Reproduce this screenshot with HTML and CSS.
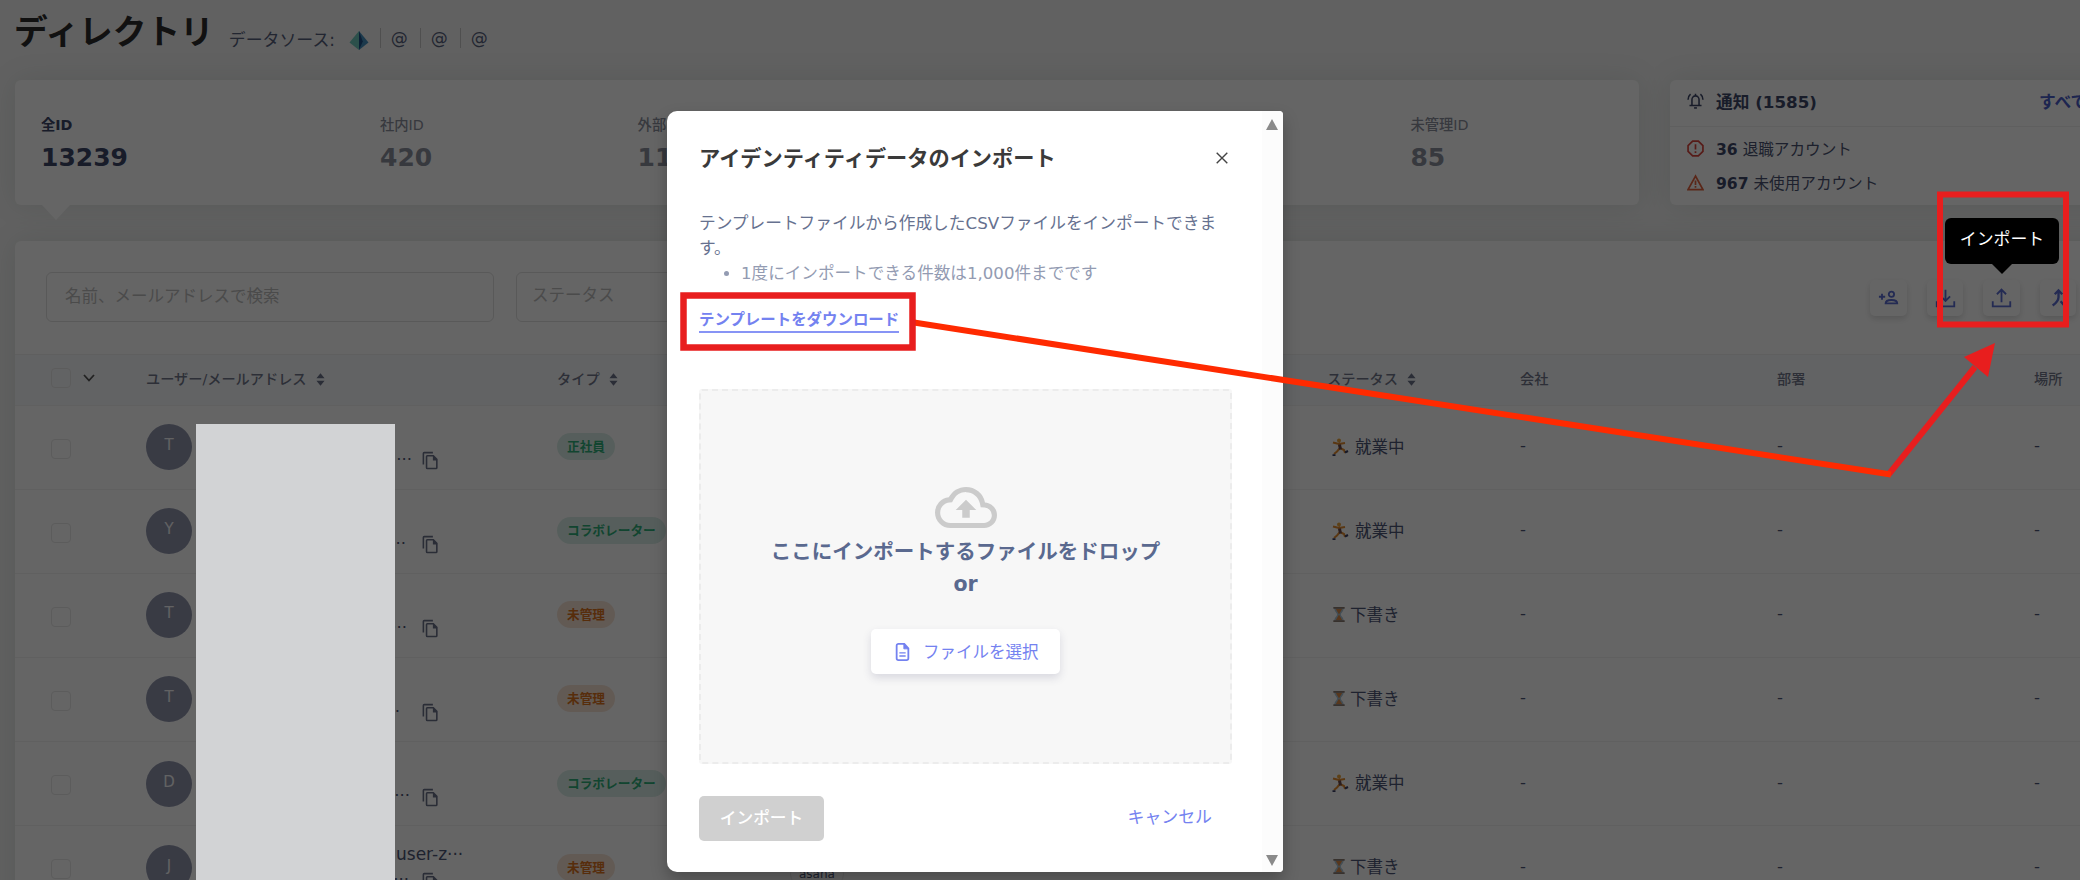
FILE: index.html
```html
<!DOCTYPE html>
<html lang="ja">
<head>
    <meta charset="UTF-8">
    <meta name="viewport" content="width=device-width, initial-scale=1.0">
    <title>ディレクトリ</title>
    <link rel="stylesheet" href="styles.css">
</head>
<body>
    <!-- shared icons -->
    <svg class="sprite">
        <symbol id="copy" viewBox="0 0 24 24"><path d="M15 1H4a2 2 0 0 0-2 2v14h2V3h11zm1 4H8a2 2 0 0 0-2 2v14a2 2 0 0 0 2 2h11a2 2 0 0 0 2-2V10zM8 21V7h7v5h4v9z"/></symbol>
        <symbol id="sort" viewBox="0 0 10 14"><path d="M5 0l4.500 5.500h-9zM5 14L.5 8.500h9z"/></symbol>
        <symbol id="run" viewBox="0 0 18 18">
            <circle cx="8" cy="2.400" r="2" fill="#e9a23b"/>
            <path d="M8 4.500L9 10L6 13.500L3 16M9 10L13 12L14 15M2 4.500L8 6L14 5" fill="none" stroke="#e08a2e" stroke-width="2"/>
            <path d="M8.500 6.500l1 5" stroke="#6b4a4a" stroke-width="3"/>
            <path d="M1.500 17.200h3M14 14.500l3-1.500" stroke="#3a3f66" stroke-width="2"/>
        </symbol>
        <symbol id="glass" viewBox="0 0 14 18">
            <path d="M2 2h10c0 4-3 5-3 7s3 3 3 7H2c0-4 3-5 3-7S2 6 2 2z" fill="#a9c4d6"/>
            <path d="M3.500 3h7L7 9l3.500 6h-7L7 9z" fill="#d98b4a"/>
            <path d="M1 1h12v1.800H1zM1 15.200h12V17H1z" fill="#8a7a70"/>
        </symbol>
    </svg>

    <div class="page">
        <header class="page-header">
            <h1>ディレクトリ</h1>
            <div class="sources">
                <span>データソース:</span>
                <svg class="gem" viewBox="0 0 20 20"><path d="M10 0L0 12l10 8z" fill="#6fc7bb"/><path d="M10 0l10 12-10 8z" fill="#4590bd"/><path d="M10 0l4 11-4 9z" fill="#1f4f86"/></svg>
                <span class="source">@</span>
                <span class="source">@</span>
                <span class="source">@</span>
            </div>
        </header>

        <section class="summary">
            <div class="card stats">
                <div class="stat active"><span>全ID</span><strong>13239</strong></div>
                <div class="stat"><span>社内ID</span><strong>420</strong></div>
                <div class="stat"><span>外部ID</span><strong>1134</strong></div>
                <div class="stat"></div>
                <div class="stat"></div>
                <div class="stat"><span>未管理ID</span><strong>85</strong></div>
            </div>
            <div class="card notices">
                <div class="notice-head">
                    <svg viewBox="0 0 24 24" fill="none" stroke="#3d4668" stroke-width="2.200"><path d="M7 18.500v-8a5 5 0 0 1 10 0v8M3.500 19h17M12 2.500v3M1.500 11c0-3 1-6 3.500-8M22.500 11c0-3-1-6-3.500-8"/><path d="M10 22.500h4"/></svg>
                    <b>通知 (1585)</b>
                    <a class="see-all">すべて見る</a>
                </div>
                <div class="notice">
                    <svg viewBox="0 0 24 24" fill="none" stroke="#d8453c" stroke-width="2.400"><path d="M8 1.500h8L22.500 8v8L16 22.500H8L1.500 16V8z"/><path d="M12 6v7.500M12 16v2.500"/></svg>
                    <span><b>36</b> 退職アカウント</span>
                </div>
                <div class="notice">
                    <svg viewBox="0 0 24 24" fill="none" stroke="#e0603c" stroke-width="2.400"><path d="M12 3L1.500 22h21z"/><path d="M12 9v6.500M12 17v2.500"/></svg>
                    <span><b>967</b> 未使用アカウント</span>
                </div>
            </div>
        </section>

        <section class="card directory">
            <div class="toolbar">
                <div class="field search">名前、メールアドレスで検索</div>
                <div class="field status">ステータス</div>
                <div class="actions">
                    <button><svg viewBox="0 0 24 24" fill="none" stroke-width="2.200"><circle cx="15.500" cy="7.500" r="3.200"/><path d="M8.500 18.500c0-5.500 14-5.500 14 0zM.5 10.500h7.500M4.200 7v7"/></svg></button>
                    <button><svg viewBox="0 0 24 24" fill="none" stroke-width="2.200"><path d="M12 2v13M6.500 10l5.500 5.500L17.500 10M1.500 16v6h21v-6"/></svg></button>
                    <button><svg viewBox="0 0 24 24" fill="none" stroke-width="2.200"><path d="M12 17V2M6.500 7.500L12 2l5.500 5.500M1.500 16v6h21v-6"/></svg></button>
                    <button><svg viewBox="0 0 24 24" fill="none" stroke-width="2.800"><path d="M12 3v8c0 4-3 7-7 10M7.500 7.500L12 3l4.500 4.500M14.500 16l4.500 5"/></svg></button>
                </div>
            </div>

            <div class="row head">
                <div class="check"><i></i><svg viewBox="0 0 12 8"><path d="M1 1l5 5.500L11 1" fill="none" stroke="#555" stroke-width="1.800"/></svg></div>
                <div>ユーザー/メールアドレス <svg class="sort"><use href="#sort"/></svg></div>
                <div>タイプ <svg class="sort"><use href="#sort"/></svg></div>
                <div></div>
                <div>ステータス <svg class="sort"><use href="#sort"/></svg></div>
                <div>会社</div>
                <div>部署</div>
                <div>場所</div>
            </div>
            <div class="row">
                <div class="check"><i></i></div>
                <div class="user"><span class="avatar">T</span><span class="mail" style="width:220px">···</span><svg class="copy"><use href="#copy"/></svg></div>
                <div><span class="badge green">正社員</span></div>
                <div></div>
                <div class="state"><svg class="run"><use href="#run"/></svg>就業中</div>
                <div>-</div><div>-</div><div>-</div>
            </div>
            <div class="row">
                <div class="check"><i></i></div>
                <div class="user"><span class="avatar">Y</span><span class="mail" style="width:214px">···</span><svg class="copy"><use href="#copy"/></svg></div>
                <div><span class="badge green">コラボレーター</span></div>
                <div></div>
                <div class="state"><svg class="run"><use href="#run"/></svg>就業中</div>
                <div>-</div><div>-</div><div>-</div>
            </div>
            <div class="row">
                <div class="check"><i></i></div>
                <div class="user"><span class="avatar">T</span><span class="mail" style="width:215px">···</span><svg class="copy"><use href="#copy"/></svg></div>
                <div><span class="badge orange">未管理</span></div>
                <div></div>
                <div class="state"><svg class="glass"><use href="#glass"/></svg>下書き</div>
                <div>-</div><div>-</div><div>-</div>
            </div>
            <div class="row">
                <div class="check"><i></i></div>
                <div class="user"><span class="avatar">T</span><span class="mail" style="width:208px">···</span><svg class="copy"><use href="#copy"/></svg></div>
                <div><span class="badge orange">未管理</span></div>
                <div></div>
                <div class="state"><svg class="glass"><use href="#glass"/></svg>下書き</div>
                <div>-</div><div>-</div><div>-</div>
            </div>
            <div class="row">
                <div class="check"><i></i></div>
                <div class="user"><span class="avatar">D</span><span class="mail" style="width:218px">···</span><svg class="copy"><use href="#copy"/></svg></div>
                <div><span class="badge green">コラボレーター</span></div>
                <div></div>
                <div class="state"><svg class="run"><use href="#run"/></svg>就業中</div>
                <div>-</div><div>-</div><div>-</div>
            </div>
            <div class="row">
                <div class="check"><i></i></div>
                <div class="user"><span class="avatar">J</span><span class="mail" style="width:217px">···</span><svg class="copy"><use href="#copy"/></svg><span class="name">user-z···</span></div>
                <div><span class="badge orange">未管理</span></div>
                <div><span class="app">asana</span></div>
                <div class="state"><svg class="glass"><use href="#glass"/></svg>下書き</div>
                <div>-</div><div>-</div><div>-</div>
            </div>
        </section>
    </div>

    <div class="overlay">
        <div class="modal">
            <div class="modal-body">
                <div class="modal-title">
                    <h2>アイデンティティデータのインポート</h2>
                    <svg viewBox="0 0 12 12"><path d="M.7.700l10.600 10.600M11.300.700L.7 11.300" stroke="#444" stroke-width="1.400"/></svg>
                </div>
                <p>テンプレートファイルから作成したCSVファイルをインポートできます。</p>
                <ul><li>1度にインポートできる件数は1,000件までです</li></ul>
                <a class="template">テンプレートをダウンロード</a>
                <div class="dropzone">
                    <svg class="cloud" viewBox="0 4 24 16" preserveAspectRatio="none"><path d="M19.350 10.040A7.490 7.490 0 0 0 12 4C9.110 4 6.600 5.640 5.350 8.040A5.994 5.994 0 0 0 0 14c0 3.310 2.690 6 6 6h13c2.760 0 5-2.240 5-5 0-2.640-2.050-4.780-4.650-4.960zM19 18H6c-2.210 0-4-1.790-4-4 0-2.050 1.530-3.760 3.560-3.970l1.070-.110.500-.950A5.469 5.469 0 0 1 12 6c2.620 0 4.880 1.860 5.390 4.430l.300 1.500 1.530.110A2.980 2.980 0 0 1 22 15c0 1.650-1.350 3-3 3zM8 13h2.550v3h2.900v-3H16l-4-4z"/></svg>
                    <strong>ここにインポートするファイルをドロップ</strong>
                    <strong>or</strong>
                    <button class="choose">
                        <svg viewBox="0 0 16 20" fill="none" stroke="#7482f0" stroke-width="2"><path d="M1.500 3a2 2 0 0 1 2-2H10l4.500 5v11a2 2 0 0 1-2 2h-9a2 2 0 0 1-2-2z"/><path d="M9.500 1v5.500h5z" fill="#7482f0" stroke-width="1"/><path d="M4.500 11h7M4.500 14.500h7" stroke-width="1.600"/></svg>
                        ファイルを選択
                    </button>
                </div>
                <div class="modal-actions">
                    <button class="submit">インポート</button>
                    <a class="cancel">キャンセル</a>
                </div>
            </div>
            <div class="scrollbar"><i class="up"></i><i class="down"></i></div>
        </div>
    </div>

    <div class="mask"></div>
    <div class="tooltip">インポート</div>
    <svg class="marks" viewBox="0 0 2080 880" fill="none">
        <path d="M1889 474L1975 367" stroke="#e81e1e" stroke-width="6"/>
        <path d="M1995 343L1964 357L1988 377z" fill="#e81e1e"/>
        <path d="M914 322.500L1891 474.500" stroke="#ff2a00" stroke-width="6"/>
        <rect x="683.500" y="295.500" width="229" height="52" stroke="#e81e1e" stroke-width="6.500"/>
        <rect x="1940" y="194.500" width="126" height="130" stroke="#e81e1e" stroke-width="6"/>
    </svg>
</body>
</html>
```
FILE: styles.css
```css
* {
    box-sizing: border-box;
}

body {
    margin: 0;
    width: 2080px;
    height: 880px;
    overflow: hidden;
    position: relative;
    background: #f2f2f2;
    color: #4a5270;
    font-family: "DejaVu Sans", "Noto Sans CJK JP", sans-serif;
    font-size: 16.5px;
}

button {
    border: none;
    font-family: inherit;
}

.sprite {
    position: absolute;
    width: 0;
    height: 0;
}

.page {
    height: 880px;
    padding-left: 15px;
    overflow: hidden;
}

.page-header {
    display: flex;
    height: 80px;
    padding-top: 8px;
    gap: 15px;
}

h1 {
    margin: 0 0 0 -1px;
    font-size: 33.7px;
    line-height: 50px;
    color: #2b2b2b;
}

.sources {
    display: flex;
    align-items: center;
    height: 60px;
    color: #56607c;
}

.sources > span:first-child {
    width: 120px;
    font-size: 16.9px;
    white-space: nowrap;
}

.gem {
    width: 20px;
    height: 19px;
    margin: 5px 11px 0 0;
}

.source {
    width: 40px;
    padding-left: 10px;
    border-left: 1px solid #c5c5c5;
    font-size: 17px;
    line-height: 20px;
}

.card {
    background: #fdfdfd;
    border-radius: 6px;
    box-shadow: 0 0 30px rgba(60, 90, 75, 0.12);
}

.summary {
    display: flex;
    gap: 31px;
    height: 125px;
}

.stats {
    display: grid;
    flex-shrink: 0;
    grid-template-columns: 339px repeat(5, 257.6px);
    width: 1624px;
    padding: 32px 0 0 26px;
    position: relative;
}

.stats::after {
    content: "";
    position: absolute;
    left: 27px;
    top: 125px;
    border: 14px solid transparent;
    border-top: 15px solid #fdfdfd;
    border-bottom: 0;
}

.stat {
    display: flex;
    flex-direction: column;
    color: #8b8e9c;
    font-weight: bold;
}

.stat span {
    font-size: 14.3px;
    font-weight: 500;
    line-height: 27px;
}

.stat strong {
    font-size: 25px;
    line-height: 37px;
}

.stat.active {
    color: #3d4668;
}

.stat.active span {
    font-weight: bold;
}

.notices {
    flex-shrink: 0;
    width: 500px;
}

.notice-head,
.notice {
    display: flex;
    align-items: center;
    gap: 12px;
    height: 34px;
    padding-left: 17px;
    font-size: 15.6px;
}

.notice-head {
    height: 47px;
    padding-bottom: 5px;
    margin-bottom: 4px;
    border-bottom: 1px solid #eee;
    font-size: 16.7px;
    color: #3d4668;
}

.notices svg {
    width: 17px;
    height: 17px;
}

.notices b {
    color: #3d4668;
}

.see-all {
    margin-left: 210px;
    font-weight: bold;
    color: #4a5cc8;
}

.directory {
    width: 2200px;
    margin-top: 36px;
    height: 700px;
}

.toolbar {
    display: flex;
    gap: 22px;
    height: 113px;
    padding: 31px 0 0 31px;
}

.field {
    height: 50px;
    padding-left: 18px;
    border: 1.5px solid #dedede;
    border-radius: 6px;
    line-height: 48px;
    color: #bbb;
}

.search {
    width: 448px;
}

.status {
    width: 300px;
    padding-left: 15px;
    line-height: 45px;
}

.actions {
    display: flex;
    gap: 20px;
    margin: 8px 0 0 1032px;
}

.actions button {
    width: 36.5px;
    height: 36px;
    padding: 8px;
    background: #fdfdfd;
    border-radius: 5px;
    box-shadow: 0 3px 6px rgba(0, 0, 0, 0.14);
}

.actions svg {
    width: 21px;
    height: 20px;
    stroke: #5a6bd0;
}

.row {
    display: grid;
    grid-template-columns: 131px 411px 233px 537px 193px 257px 257px 200px;
    align-items: center;
    height: 84.15px;
    border-bottom: 1px solid #f0f0f0;
    color: #4d5575;
}

.row.head {
    height: 51.5px;
    padding-bottom: 3px;
    background: #f6f8fb;
    border-top: 1px solid #eee;
    font-size: 14.2px;
    font-weight: 500;
    color: #70768a;
}

.check {
    display: flex;
    align-items: center;
    padding-left: 36px;
    gap: 12px;
}

.row:not(.head) .check {
    padding-top: 3px;
}

.check i {
    width: 20px;
    height: 20px;
    border: 1.5px solid #e6e6e6;
    border-radius: 4px;
}

.check svg {
    width: 12px;
    height: 8px;
}

.sort {
    width: 9px;
    height: 13px;
    margin-left: 5px;
    vertical-align: -2px;
    fill: #6a7088;
}

.user {
    display: flex;
    align-items: center;
    position: relative;
}

.avatar {
    width: 46px;
    height: 46px;
    border-radius: 50%;
    background: #8f94ab;
    color: #f4f4f8;
    font-size: 15px;
    line-height: 43px;
    text-align: center;
}

.mail {
    padding-top: 24px;
    text-align: right;
}

.copy {
    position: absolute;
    left: 275px;
    top: 27px;
    width: 19px;
    height: 19px;
    fill: #6a7088;
}

.name {
    position: absolute;
    left: 250px;
    top: -1px;
    font-size: 17px;
}

.badge {
    display: inline-block;
    margin-bottom: 1px;
    padding: 0 10px;
    border-radius: 14px;
    font-size: 12.7px;
    font-weight: bold;
    line-height: 27px;
}

.green {
    background: #d8ece5;
    color: #2eac78;
}

.orange {
    background: #f5e2d3;
    color: #d9711c;
}

.app {
    display: inline-block;
    margin-top: 12px;
    padding: 0 8px;
    border: 1px solid #e8e8e8;
    border-radius: 14px;
    font-size: 12px;
    line-height: 24px;
}

.row > div:nth-child(n+5) {
    padding-bottom: 3px;
}

.row.head > div:nth-child(n+5) {
    padding-bottom: 0;
}

.state {
    display: flex;
    align-items: center;
}

.run {
    width: 18px;
    height: 18px;
    margin: 2px 6px 0 4px;
}

.glass {
    width: 14px;
    height: 17px;
    margin: 1px 4px 0 5px;
}

.overlay {
    position: absolute;
    inset: 0;
    display: flex;
    padding: 111px 0 0 667px;
    background: rgba(0, 0, 0, 0.6);
}

.modal {
    display: flex;
    width: 616px;
    height: 761px;
    background: #fff;
    border-radius: 10px 4px 4px 10px;
    overflow: hidden;
    box-shadow: 0 8px 16px rgba(0, 0, 0, 0.25);
}

.modal-body {
    width: 595px;
    padding: 30px 30px 0 32px;
}

.modal-title {
    display: flex;
    align-items: center;
    justify-content: space-between;
    height: 34px;
    padding-right: 4px;
}

.modal-title svg {
    width: 12px;
    height: 12px;
}

h2 {
    margin: -3px 0 0;
    font-size: 21.2px;
    color: #3a3a3a;
}

.modal p {
    margin: 36px -5px 0 0;
    font-size: 16.7px;
    line-height: 25px;
    color: #66718f;
}

.modal ul {
    margin: 0;
    padding-left: 42px;
    color: #939bb2;
    font-size: 16.6px;
    line-height: 26px;
}

.template {
    display: inline-block;
    height: 26px;
    margin-top: 20px;
    border-bottom: 2px solid #8794f5;
    font-size: 15.45px;
    font-weight: bold;
    line-height: 27px;
    color: #7482f0;
}

.dropzone {
    display: flex;
    flex-direction: column;
    align-items: center;
    height: 375px;
    margin-top: 56px;
    padding-top: 96px;
    background: #f7f7f7;
    border: 2px dashed #ececec;
    border-radius: 3px;
}

.cloud {
    width: 62px;
    height: 41px;
    margin-bottom: 8px;
    fill: #cbcbcb;
}

.dropzone strong {
    font-size: 20.5px;
    line-height: 32px;
    color: #5a698f;
}

.choose {
    display: flex;
    align-items: center;
    gap: 13px;
    width: 189px;
    height: 45px;
    margin-top: 29px;
    padding: 0 0 2px 24px;
    background: #fff;
    border-radius: 5px;
    box-shadow: 0 4px 8px rgba(50, 50, 93, 0.15);
    font-size: 16.5px;
    color: #7482f0;
}

.choose svg {
    width: 15px;
    height: 18px;
    margin-top: 3px;
}

.modal-actions {
    display: flex;
    justify-content: space-between;
    margin-top: 32px;
    padding-right: 20px;
    line-height: 42px;
}

.submit {
    width: 125px;
    height: 45px;
    padding-bottom: 4px;
    background: #d0d0d0;
    border-radius: 5px;
    font-size: 16.7px;
    font-weight: 500;
    color: #fff;
}

.cancel {
    color: #7482f0;
    font-size: 16.9px;
}

.scrollbar {
    display: flex;
    flex-direction: column;
    align-items: center;
    justify-content: space-between;
    width: 21px;
    padding: 8px 1px 6px 0;
    background: #fcfcfc;
}

.up,
.down {
    border: 6px solid transparent;
}

.up {
    border-top: 0;
    border-bottom: 11px solid #8a8a8a;
}

.down {
    border-bottom: 0;
    border-top: 11px solid #8a8a8a;
}

.mask {
    position: absolute;
    left: 196px;
    top: 424px;
    width: 199px;
    height: 456px;
    background: #d2d3d5;
}

.tooltip {
    position: absolute;
    left: 1945px;
    top: 218px;
    width: 114px;
    height: 46px;
    background: #000;
    border-radius: 6px;
    color: #fff;
    font-size: 16.9px;
    line-height: 42px;
    text-align: center;
}

.tooltip::after {
    content: "";
    position: absolute;
    left: 47px;
    top: 46px;
    border: 10px solid transparent;
    border-top-color: #000;
    border-bottom: 0;
}

.marks {
    position: absolute;
    left: 0;
    top: 0;
    width: 2080px;
    height: 880px;
}
```
